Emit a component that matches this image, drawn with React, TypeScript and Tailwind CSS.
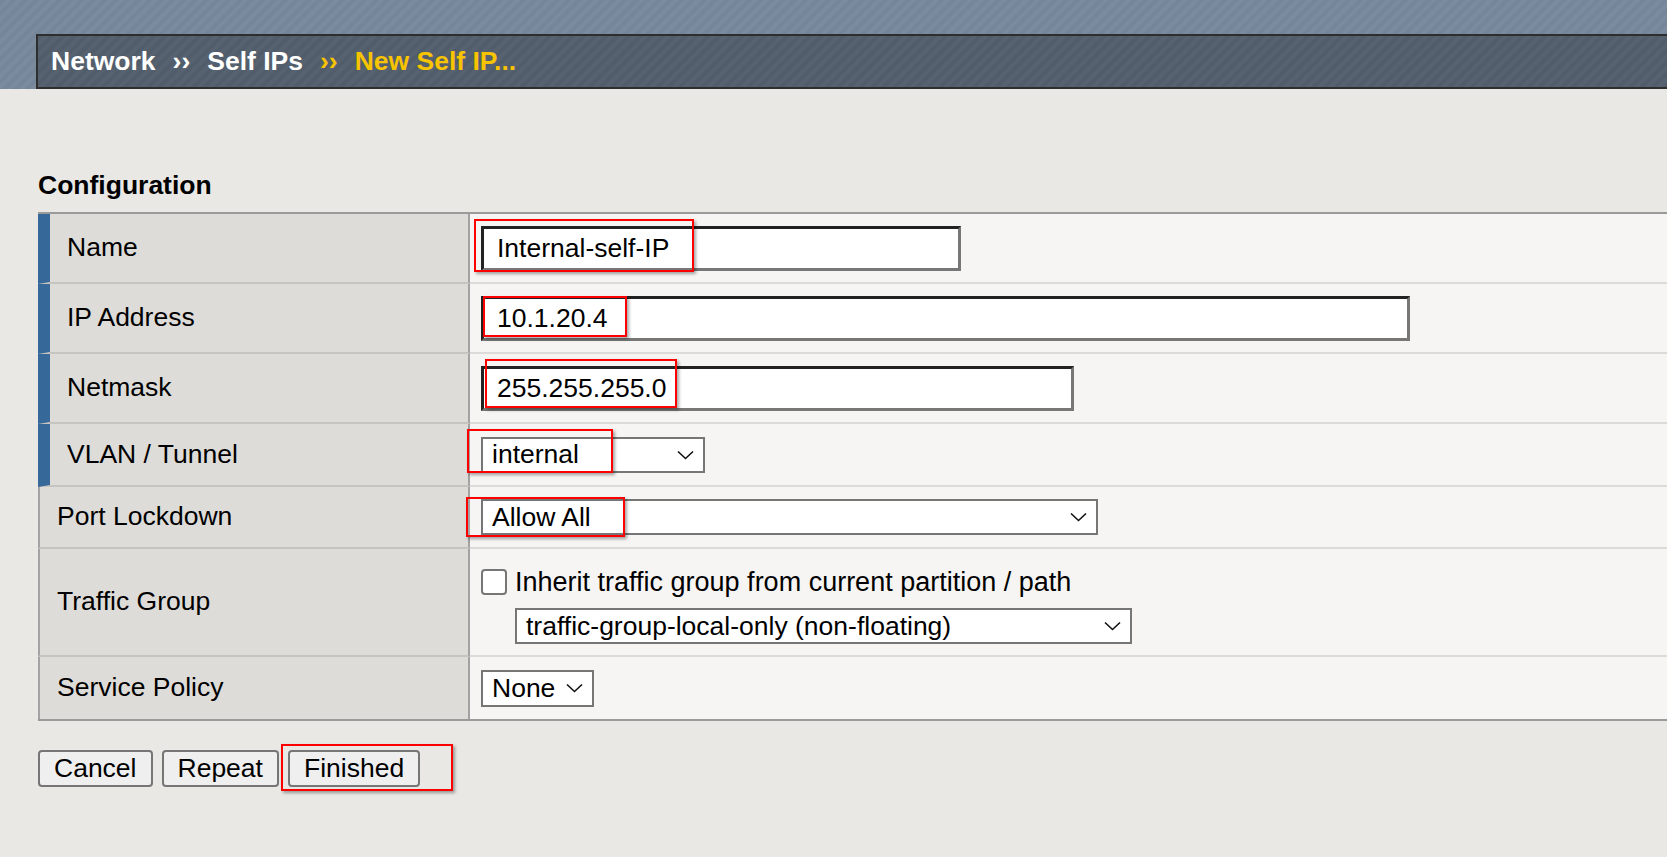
import type { ReactNode } from "react";

function RedBox({ className }: { className: string }) {
  return (
    <div
      className={`pointer-events-none absolute border-2 border-[#f00] shadow-[2px_2px_3px_rgba(0,0,0,0.35)] ${className}`}
    />
  );
}

function Chevron() {
  return (
    <svg width="17" height="10" viewBox="0 0 17 10" className="shrink-0">
      <path d="M1 1.5 L8.5 8.5 L16 1.5" fill="none" stroke="#111" strokeWidth="1.6" />
    </svg>
  );
}

function Select({ value, className }: { value: string; className: string }) {
  return (
    <div
      className={`flex h-[36px] items-center justify-between border-2 border-[#767676] bg-white pl-[9px] pr-[9px] text-[26.5px] leading-none text-black ${className}`}
    >
      <span>{value}</span>
      <Chevron />
    </div>
  );
}

function TextBox({ value, className }: { value: string; className: string }) {
  return (
    <input
      readOnly
      value={value}
      className={`h-[45px] border-[3px] border-t-[#222] border-l-[#222] border-b-[#777] border-r-[#777] bg-white pl-[13px] text-[26.5px] text-black outline-none ${className}`}
    />
  );
}

function Row({
  label,
  required,
  height,
  last,
  children,
}: {
  label: string;
  required?: boolean;
  height: string;
  last?: boolean;
  children: ReactNode;
}) {
  return (
    <div className={`flex ${height}`}>
      <div
        className={`flex w-[432px] shrink-0 items-center border-r-2 border-r-[#a2a2a2] bg-[#dedcd8] pl-[17px] text-[26.5px] text-black ${
          required ? "border-l-[12px] border-l-[#36689a]" : "border-l-2 border-l-[#a3a3a3]"
        } ${last ? "" : "border-b-2 border-b-[#c6c4c0]"}`}
      >
        {label}
      </div>
      <div
        className={`flex flex-1 items-center bg-[#f6f5f3] pl-[11px] ${last ? "" : "border-b-2 border-b-[#dcdbd8]"}`}
      >
        {children}
      </div>
    </div>
  );
}

export default function App() {
  return (
    <div className="min-h-screen bg-[#e9e8e4] font-['Liberation_Sans',Arial,sans-serif]">
      <div className="bg-[repeating-linear-gradient(135deg,#76869a_0px,#76869a_4px,#7b8b9d_4px,#7b8b9d_8px)] pl-[36px] pt-[34px]">
        <div className="flex h-[55px] items-center gap-[17px] border-2 border-r-0 border-[#2e2e2e] bg-[repeating-linear-gradient(135deg,#515d6a_0px,#515d6a_4px,#56626f_4px,#56626f_8px)] pl-[13px] text-[26.5px] font-bold text-white">
          <span>Network</span>
          <span>››</span>
          <span>Self IPs</span>
          <span className="text-[#f8c300]">››</span>
          <span className="text-[#f8c300]">New Self IP...</span>
        </div>
      </div>

      <div className="ml-[38px] mt-[81px] text-[26.5px] font-bold leading-[31px] text-black">Configuration</div>

      <div className="ml-[38px] mt-[11px] border-y-2 border-[#9a9a9a]">
        <Row label="Name" required height="h-[70px]">
          <div className="relative">
            <TextBox value="Internal-self-IP" className="w-[480px]" />
            <RedBox className="left-[-7px] top-[-7px] h-[53px] w-[220px]" />
          </div>
        </Row>
        <Row label="IP Address" required height="h-[70px]">
          <div className="relative">
            <TextBox value="10.1.20.4" className="w-[929px]" />
            <RedBox className="left-[2px] top-0 h-[41px] w-[144px]" />
          </div>
        </Row>
        <Row label="Netmask" required height="h-[70px]">
          <div className="relative">
            <TextBox value="255.255.255.0" className="w-[593px]" />
            <RedBox className="left-[4px] top-[-7px] h-[49px] w-[192px]" />
          </div>
        </Row>
        <Row label="VLAN / Tunnel" required height="h-[63px]">
          <div className="relative">
            <Select value="internal" className="w-[224px]" />
            <RedBox className="left-[-14px] top-[-8px] h-[44px] w-[146px]" />
          </div>
        </Row>
        <Row label="Port Lockdown" height="h-[62px]">
          <div className="relative">
            <Select value="Allow All" className="w-[617px]" />
            <RedBox className="left-[-15px] top-[-2px] h-[40px] w-[159px]" />
          </div>
        </Row>
        <Row label="Traffic Group" height="h-[108px]">
          <div className="flex flex-col gap-[6px] pt-[2px]">
            <div className="flex items-center gap-[8px] text-[27px] text-black">
              <span className="h-[26px] w-[26px] rounded-[4px] border-2 border-[#767676] bg-white" />
              <span>Inherit traffic group from current partition / path</span>
            </div>
            <Select value="traffic-group-local-only (non-floating)" className="ml-[34px] w-[617px]" />
          </div>
        </Row>
        <Row label="Service Policy" height="h-[62px]" last>
          <Select value="None" className="h-[37px] w-[113px]" />
        </Row>
      </div>

      <div className="ml-[38px] mt-[29px] flex gap-[9px]">
        {["Cancel", "Repeat", "Finished"].map((b) => (
          <div key={b} className="relative">
            <button className="h-[37px] rounded-[4px] border-2 border-[#767676] bg-[#efefef] px-[14px] text-[26.5px] leading-none text-black">
              {b}
            </button>
            {b === "Finished" && <RedBox className="left-[-7px] top-[-6px] h-[47px] w-[172px]" />}
          </div>
        ))}
      </div>
    </div>
  );
}
